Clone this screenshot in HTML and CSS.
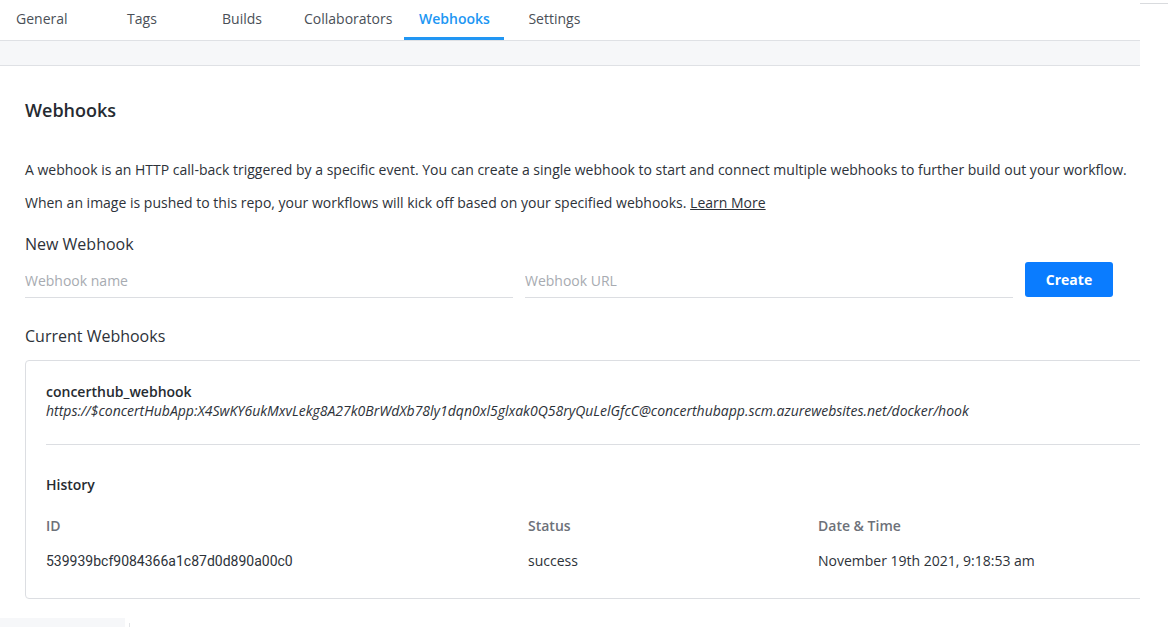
FILE: index.html
```html
<!DOCTYPE html>
<html>
<head>
<meta charset="utf-8">
<link rel="stylesheet" href="styles.css">
</head>
<body>
<div class="page">
  <div class="main">
    <nav class="tabs">
      <a class="tab tab-first">General</a>
      <a class="tab">Tags</a>
      <a class="tab">Builds</a>
      <a class="tab tab-wide">Collaborators</a>
      <a class="tab active">Webhooks</a>
      <a class="tab">Settings</a>
    </nav>
    <div class="subbar"></div>
    <section class="content">
      <h1 class="title">Webhooks</h1>
      <p class="desc">A webhook is an HTTP call-back triggered by a specific event. You can create a single webhook to start and connect multiple webhooks to further build out your workflow.</p>
      <p class="desc desc-2">When an image is pushed to this repo, your workflows will kick off based on your specified webhooks. <a class="link">Learn More</a></p>
      <h2 class="subtitle">New Webhook</h2>
      <div class="form">
        <input class="field" placeholder="Webhook name">
        <input class="field" placeholder="Webhook URL">
        <button class="btn">Create</button>
      </div>
      <h2 class="subtitle current">Current Webhooks</h2>
      <div class="card">
        <div class="hook">
          <div class="hook-name">concerthub_webhook</div>
          <div class="hook-url">https://$concertHubApp:X4SwKY6ukMxvLekg8A27k0BrWdXb78ly1dqn0xl5glxak0Q58ryQuLelGfcC@concerthubapp.scm.azurewebsites.net/docker/hook</div>
        </div>
        <div class="history">
          <div class="history-title">History</div>
          <div class="grid">
            <div class="th">ID</div>
            <div class="th">Status</div>
            <div class="th">Date &amp; Time</div>
            <div class="td">539939bcf9084366a1c87d0d890a00c0</div>
            <div class="td td-os">success</div>
            <div class="td td-os">November 19th 2021, 9:18:53 am</div>
          </div>
        </div>
      </div>
    </section>
    <div class="foot">
      <div class="foot-block"></div>
      <div class="foot-line"></div>
    </div>
  </div>
  <div class="side">
    <div class="side-line"></div>
  </div>
</div>
</body>
</html>
```
FILE: styles.css
```css
* { box-sizing: border-box; }
html, body { margin: 0; padding: 0; background: #fff; }
body {
  font-family: "Open Sans", "Liberation Sans", sans-serif;
  color: #2d3239;
  font-size: 14px;
}
.page { display: flex; width: 1171px; height: 627px; overflow: hidden; }
.main { width: 1140px; flex: none; overflow: hidden; display: flex; flex-direction: column; }
.main > * { flex: none; }
.side { flex: 1; padding-top: 3px; }
.side-line { height: 1px; background: #d9dbde; margin-right: 3px; }

.tabs { display: flex; height: 40px; }
.tab {
  height: 40px; min-width: 100px; padding: 0 12px;
  display: flex; align-items: center; justify-content: center;
  font-size: 14px; color: #4a4f57; border-bottom: 2px solid transparent;
  padding-bottom: 2px;
}
.tab-first { min-width: 92px; justify-content: flex-start; padding-left: 16px; }
.tab-wide { min-width: 112px; }
.tab.active { color: #2196f3; font-weight: 600; border-bottom: 3px solid #2196f3; padding-bottom: 1px; }

.subbar { height: 26px; background: #f6f7f9; border-top: 1px solid #dfe1e5; border-bottom: 1px solid #dfe1e5; }

.content { padding: 0 0 0 25px; }
.title { margin: 32px 0 0; font-size: 18px; font-weight: 600; line-height: 24px; color: #262b31; }
.desc { margin: 38px 0 0; line-height: 20px; color: #2d3239; }
.desc-2 { margin-top: 13px; }
.link { text-decoration: underline; color: #2d3239; }
.subtitle { margin: 20px 0 0; font-size: 16px; font-weight: 400; line-height: 22px; color: #2d3239; }
.current { margin-top: 28px; }

.form { display: flex; align-items: center; gap: 12px; margin-top: 7px; height: 35px; }
.field {
  width: 488px; height: 34px; border: 0; border-bottom: 1px solid #dcdee2;
  font-family: inherit; font-size: 14px; padding: 0; margin-bottom: -2px;
  color: #2d3239; outline: none; background: transparent;
}
.field::placeholder { color: #a7abb1; }
.btn {
  width: 88px; height: 35px; border: 0; border-radius: 3px; background: #0a7cff;
  color: #fff; font-family: inherit; font-weight: 700; font-size: 14px;
}

.card {
  margin-top: 13px; width: 1140px; border: 1px solid #dcdee2; border-radius: 4px;
  padding: 0 0 0 20px; height: 239px;
}
.hook { padding: 21px 0 24px; border-bottom: 1px solid #dcdee2; }
.hook-name { font-weight: 600; line-height: 20px; color: #262b31; }
.hook-url { font-style: italic; line-height: 18px; color: #2d3239; }
.history { padding-top: 30px; }
.history-title { font-weight: 600; line-height: 20px; color: #262b31; }
.grid { display: grid; grid-template-columns: 482px 290px 1fr; margin-top: 21px; row-gap: 15px; }
.th { font-weight: 600; color: #6d7179; line-height: 20px; }
.td { font-family: Roboto, "Open Sans", sans-serif; color: #2d3239; line-height: 20px; }
.td-os { font-family: "Open Sans", sans-serif; }

.foot { display: flex; align-items: flex-start; margin-top: 19px; height: 9px; }
.foot-block { width: 125px; height: 9px; background: #f6f7f9; }
.foot-line { width: 1px; height: 4px; background: #e2e4e7; margin-left: 4px; margin-top: 5px; }
```
